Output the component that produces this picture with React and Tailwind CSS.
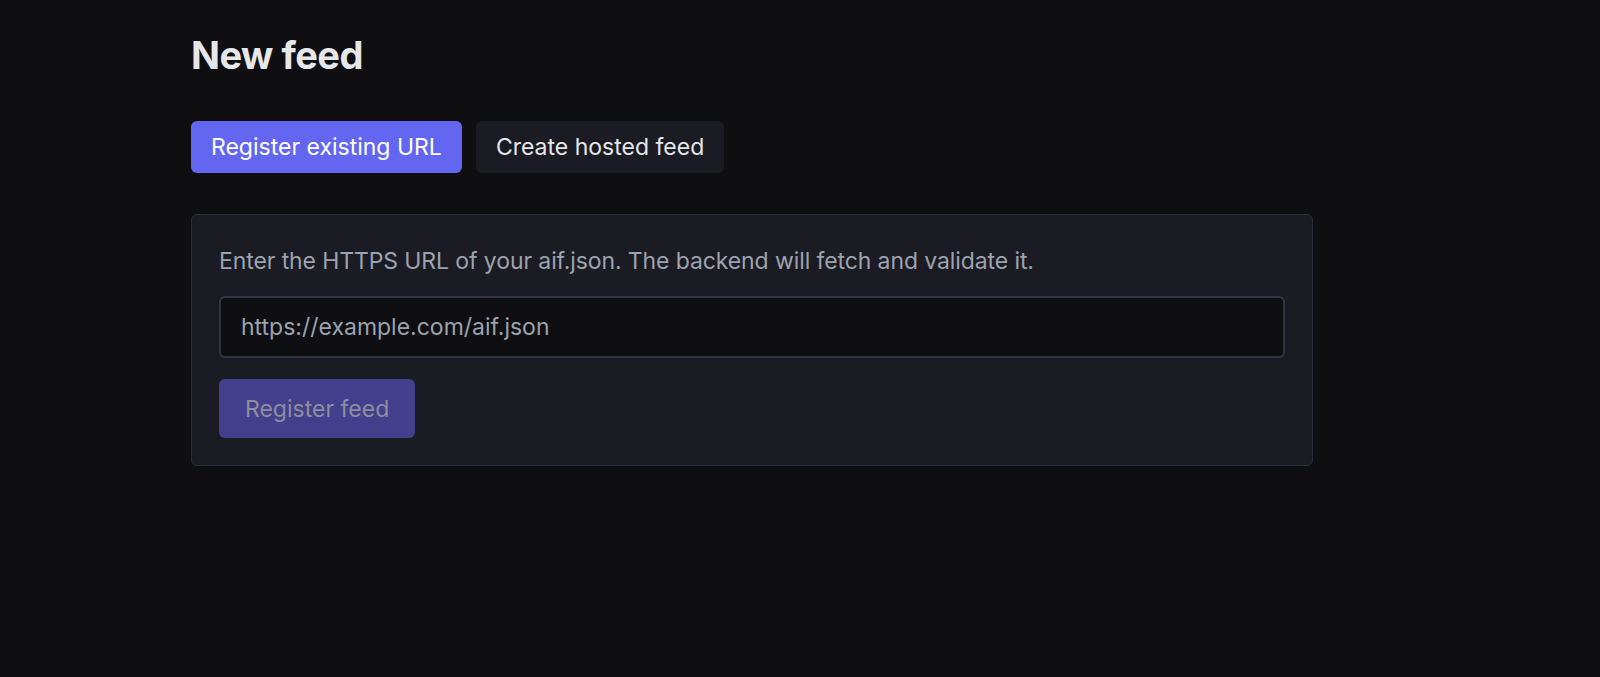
import React from "react";

function App() {
  const [tab, setTab] = React.useState("url");
  const [url, setUrl] = React.useState("");

  return (
    <div
      className="min-h-screen w-full bg-[#0f0f12] text-gray-200"
      style={{ fontFamily: "Inter, 'Noto Sans', sans-serif" }}
    >
      <div className="pl-[191px] pt-[30px] w-[1313px]">
        <h1 className="text-[38px] leading-[50px] font-bold tracking-[-0.5px] text-[#e5e7eb]">
          New feed
        </h1>

        <div className="mt-[41px] flex gap-[14px]">
          <button
            onClick={() => setTab("url")}
            className={
              tab === "url"
                ? "h-[52px] px-[20px] rounded-[6px] bg-[#6366f1] text-white text-[23px] leading-[30px]"
                : "h-[52px] px-[20px] rounded-[6px] bg-[#1b1b24] text-[#e5e7eb] text-[23px] leading-[30px]"
            }
          >
            Register existing URL
          </button>
          <button
            onClick={() => setTab("hosted")}
            className={
              tab === "hosted"
                ? "h-[52px] px-[20px] rounded-[6px] bg-[#6366f1] text-white text-[23px] leading-[30px]"
                : "h-[52px] px-[20px] rounded-[6px] bg-[#1b1b24] text-[#e5e7eb] text-[23px] leading-[30px]"
            }
          >
            Create hosted feed
          </button>
        </div>

        <div className="mt-[41px] rounded-[6px] border border-[#292e3d] bg-[#1b1b24] px-[27px] pt-[31px] pb-[27px]">
          <p className="text-[23px] leading-[30px] tracking-[-0.1px] text-[#9ca3af]">
            Enter the HTTPS URL of your aif.json. The backend will fetch and validate it.
          </p>
          <input
            type="text"
            value={url}
            onChange={(e) => setUrl(e.target.value)}
            placeholder="https://example.com/aif.json"
            className="mt-[20px] block w-full h-[62px] rounded-[6px] border-2 border-[#2f3545] bg-[#0f0f12] px-[20px] text-[23px] text-gray-200 placeholder:text-[#9ca3af] outline-none"
          />
          <button
            disabled={!url}
            className="mt-[21px] h-[59px] px-[26px] rounded-[6px] bg-[#6366f1] disabled:bg-[#433f8d] text-white disabled:text-[#8e8d9d] text-[23px] leading-[30px]"
          >
            Register feed
          </button>
        </div>
      </div>
    </div>
  );
}

export default App;
